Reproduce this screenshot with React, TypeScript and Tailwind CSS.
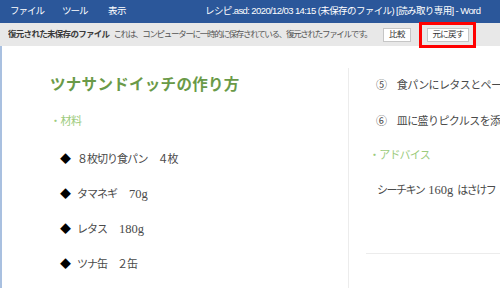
const uiFont = { fontFamily: '"Liberation Sans", "Noto Sans CJK JP", sans-serif' }
const docFont = { fontFamily: '"Liberation Serif", "Noto Sans CJK JP", serif' }

function App() {
  const ingredients = [
    { name: '８枚切り食パン', amount: '４枚', latin: false },
    { name: 'タマネギ', amount: '70g', latin: true },
    { name: 'レタス', amount: '180g', latin: true },
    { name: 'ツナ缶', amount: '２缶', latin: false },
  ]

  return (
    <div className="w-[500px] h-[288px] overflow-hidden bg-white flex flex-col" style={uiFont}>
      {/* title bar */}
      <div className="h-[23px] shrink-0 bg-[#2b579a] text-white text-[9.5px] flex items-center whitespace-nowrap overflow-hidden">
        <span className="ml-[10px] w-[52px] tracking-[-1px]">ファイル</span>
        <span className="w-[46px] tracking-[-1px]">ツール</span>
        <span className="w-[97px] tracking-[-0.5px]">表示</span>
        <span className="tracking-[-0.6px]">レシピ.asd: 2020/12/03 14:15 (未保存のファイル) [読み取り専用] - Word</span>
      </div>

      {/* recovered file bar */}
      <div className="h-[23px] shrink-0 bg-[#e8e8e8] flex items-center whitespace-nowrap">
        <div className="ml-[8px] w-[375px] text-[8.5px] overflow-hidden">
          <span className="font-bold text-[#3a3a3a] tracking-[-0.7px]">復元された未保存のファイル</span>
          <span className="ml-[4px] text-[#555] tracking-[-1.3px]">これは、コンピューターに一時的に保存されている、復元されたファイルです。</span>
        </div>
        <button className="w-[28px] h-[14px] bg-white border border-[#c6c6c6] text-[8.5px] tracking-[-0.5px] leading-none flex items-center justify-center text-[#333]">
          比較
        </button>
        <div className="ml-[8px] w-[57px] h-[26px] shrink-0 border-[3px] border-[#ff0000] pl-[5px] flex items-center">
          <button className="w-[42px] h-[14px] bg-white border border-[#c6c6c6] text-[8.5px] tracking-[-0.8px] leading-none flex items-center justify-center text-[#333]">
            元に戻す
          </button>
        </div>
      </div>

      {/* document */}
      <div className="flex-1 flex border-l-2 border-[#a9c0e0] text-[#4a4a4a] whitespace-nowrap" style={docFont}>
        <div className="w-[346px] shrink-0 pl-[48px] pt-[31px]">
          <h1 className="text-[15.5px] tracking-[0.3px] text-[#6a9a48] font-bold leading-none">ツナサンドイッチの作り方</h1>
          <div className="mt-[23px] text-[11px] tracking-[-0.5px] text-[#9ccb7c] leading-none">・材料</div>
          <ul className="mt-[15px]">
            {ingredients.map((item) => (
              <li key={item.name} className="h-[35px] flex items-center text-[11px] tracking-[-1px]">
                <span className="ml-[10px] text-[11px] text-black">◆</span>
                <span className="ml-[7px]">{item.name}</span>
                {item.latin ? (
                  <span className="ml-[12px] text-[12.5px] tracking-normal">{item.amount}</span>
                ) : (
                  <span>　{item.amount}</span>
                )}
              </li>
            ))}
          </ul>
        </div>

        <div className="flex-1 mt-[22px] border-l border-[#ececec] flex flex-col overflow-hidden">
          <div className="pl-[27px] pt-[12px] text-[11px] tracking-[-0.6px] leading-none">
            ⑤　食パンにレタスとペー
          </div>
          <div className="pl-[27px] mt-[25px] text-[11px] tracking-[-0.6px] leading-none">
            ⑥　皿に盛りピクルスを添
          </div>
          <div className="pl-[20px] mt-[23px] text-[11px] tracking-[-0.8px] text-[#9ccb7c] leading-none">
            ・アドバイス
          </div>
          <div className="pl-[28px] mt-[23px] text-[11px] tracking-[-1.5px] leading-none">
            シーチキン<span className="mx-[4px] text-[12.5px] tracking-normal">160g</span>はさけフ
          </div>
          <div className="ml-[17px] mt-[56px] h-px bg-[#ececec]" />
        </div>
      </div>
    </div>
  )
}

export default App
